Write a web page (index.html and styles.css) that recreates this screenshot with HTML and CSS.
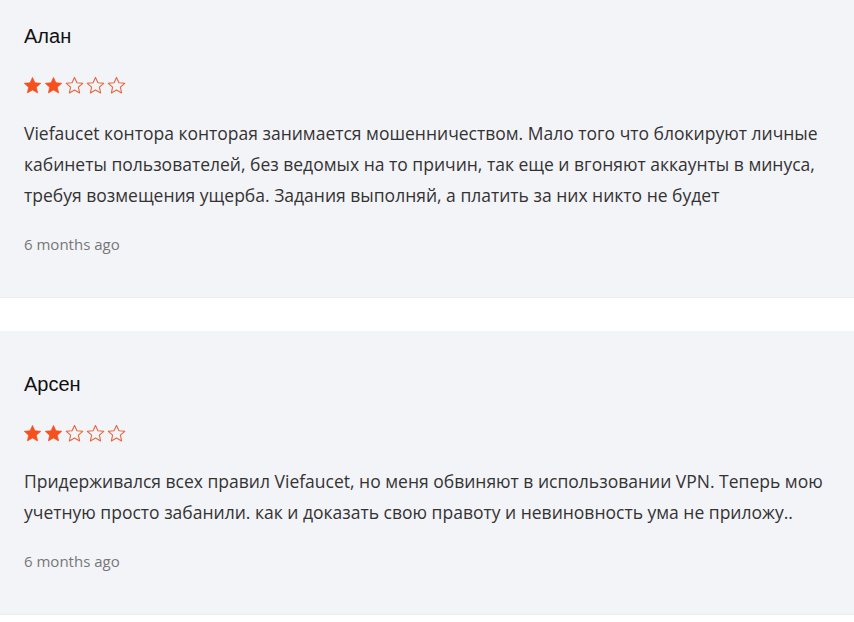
FILE: index.html
```html
<!DOCTYPE html>
<html lang="ru">
<head>
<meta charset="utf-8">
<link rel="stylesheet" href="styles.css">
</head>
<body>
<div class="reviews">
  <div class="review review-first">
    <div class="name">Алан</div>
    <div class="stars">
      <svg class="star on" viewBox="2 2 20 19"><path d="M12 2.5l2.9 6.3 6.9.7-5.2 4.6 1.5 6.8L12 17.4l-6.1 3.5 1.5-6.8-5.2-4.6 6.9-.7z"/></svg>
      <svg class="star on" viewBox="2 2 20 19"><path d="M12 2.5l2.9 6.3 6.9.7-5.2 4.6 1.5 6.8L12 17.4l-6.1 3.5 1.5-6.8-5.2-4.6 6.9-.7z"/></svg>
      <svg class="star off" viewBox="2 2 20 19"><path d="M12 2.5l2.9 6.3 6.9.7-5.2 4.6 1.5 6.8L12 17.4l-6.1 3.5 1.5-6.8-5.2-4.6 6.9-.7z"/></svg>
      <svg class="star off" viewBox="2 2 20 19"><path d="M12 2.5l2.9 6.3 6.9.7-5.2 4.6 1.5 6.8L12 17.4l-6.1 3.5 1.5-6.8-5.2-4.6 6.9-.7z"/></svg>
      <svg class="star off" viewBox="2 2 20 19"><path d="M12 2.5l2.9 6.3 6.9.7-5.2 4.6 1.5 6.8L12 17.4l-6.1 3.5 1.5-6.8-5.2-4.6 6.9-.7z"/></svg>
    </div>
    <p class="text">Viefaucet контора конторая занимается мошенничеством. Мало того что блокируют личные кабинеты пользователей, без ведомых на то причин, так еще и вгоняют аккаунты в минуса, требуя возмещения ущерба. Задания выполняй, а платить за них никто не будет</p>
    <div class="date">6 months ago</div>
  </div>
  <div class="review">
    <div class="name">Арсен</div>
    <div class="stars">
      <svg class="star on" viewBox="2 2 20 19"><path d="M12 2.5l2.9 6.3 6.9.7-5.2 4.6 1.5 6.8L12 17.4l-6.1 3.5 1.5-6.8-5.2-4.6 6.9-.7z"/></svg>
      <svg class="star on" viewBox="2 2 20 19"><path d="M12 2.5l2.9 6.3 6.9.7-5.2 4.6 1.5 6.8L12 17.4l-6.1 3.5 1.5-6.8-5.2-4.6 6.9-.7z"/></svg>
      <svg class="star off" viewBox="2 2 20 19"><path d="M12 2.5l2.9 6.3 6.9.7-5.2 4.6 1.5 6.8L12 17.4l-6.1 3.5 1.5-6.8-5.2-4.6 6.9-.7z"/></svg>
      <svg class="star off" viewBox="2 2 20 19"><path d="M12 2.5l2.9 6.3 6.9.7-5.2 4.6 1.5 6.8L12 17.4l-6.1 3.5 1.5-6.8-5.2-4.6 6.9-.7z"/></svg>
      <svg class="star off" viewBox="2 2 20 19"><path d="M12 2.5l2.9 6.3 6.9.7-5.2 4.6 1.5 6.8L12 17.4l-6.1 3.5 1.5-6.8-5.2-4.6 6.9-.7z"/></svg>
    </div>
    <p class="text">Придерживался всех правил Viefaucet, но меня обвиняют в использовании VPN. Теперь мою учетную просто забанили. как и доказать свою правоту и невиновность ума не приложу..</p>
    <div class="date">6 months ago</div>
  </div>
</div>
</body>
</html>
```
FILE: styles.css
```css
html, body {
  margin: 0;
  padding: 0;
  background: #ffffff;
}
body {
  font-family: "Open Sans", "Liberation Sans", sans-serif;
  overflow: hidden;
}
.reviews {
  display: flex;
  flex-direction: column;
  gap: 33px;
}
.review {
  background: #f3f4f8;
  padding: 39px 24px 42px;
  border-bottom: 1px solid #ececf0;
  display: flex;
  flex-direction: column;
}
.review-first {
  padding-top: 22px;
}
.name {
  font-family: "Liberation Sans", Arial, sans-serif;
  font-size: 20px;
  line-height: 28px;
  color: #111111;
}
.stars {
  display: flex;
  gap: 4px;
  margin-top: 27px;
  height: 16px;
}
.star {
  width: 17px;
  height: 16px;
  overflow: visible;
}
.star.on path {
  fill: #f5511e;
  stroke: #f5511e;
  stroke-width: 0.8;
  stroke-linejoin: round;
}
.star.off path {
  fill: none;
  stroke: #e5663e;
  stroke-width: 1.3;
  stroke-linejoin: round;
}
.text {
  margin: 25px 0 0;
  font-size: 17.5px;
  line-height: 31px;
  color: #333333;
}
.date {
  margin-top: 22px;
  font-size: 15px;
  line-height: 22px;
  color: #777777;
}
```
